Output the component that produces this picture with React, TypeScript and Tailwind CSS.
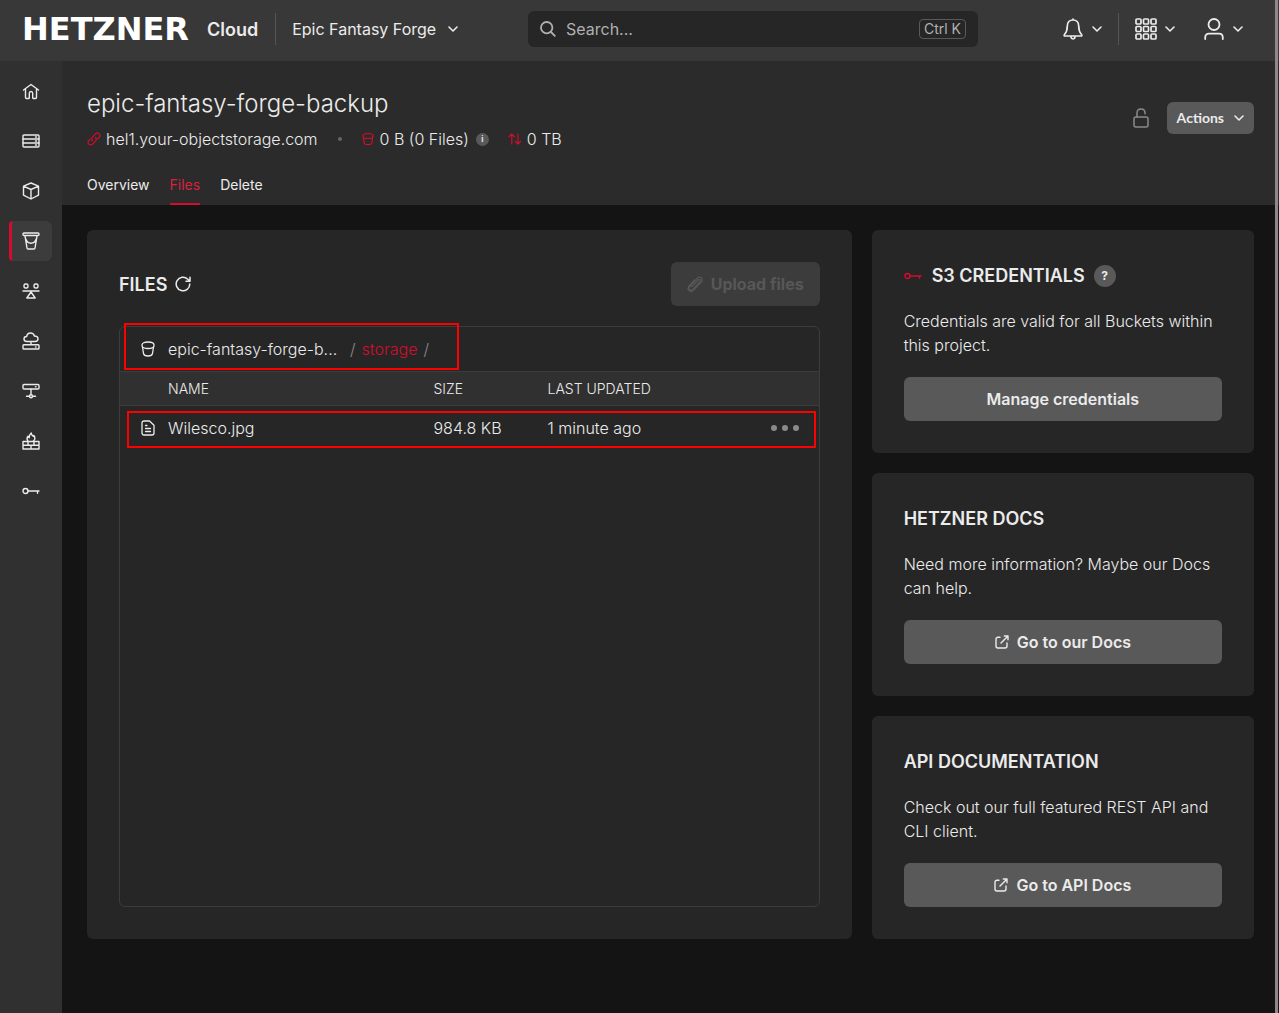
import type { ReactNode } from 'react';
import clsx from 'clsx';

interface IconProps {
    className?: string;
}

interface SvgProps extends IconProps {
    width?: number;
    height?: number;
    stroke?: number;
    children: ReactNode;
}

function Svg({ width = 18, height = 18, stroke = 1.4, className, children }: SvgProps) {
    return (
        <svg
            width={width}
            height={height}
            viewBox={`0 0 ${width} ${height}`}
            fill="none"
            stroke="currentColor"
            strokeWidth={stroke}
            strokeLinecap="round"
            strokeLinejoin="round"
            aria-hidden="true"
            className={clsx('shrink-0', className)}
        >
            {children}
        </svg>
    );
}

const ChevronIcon = ({ className }: IconProps) => (
    <Svg width={10} height={6} stroke={1.6} className={className}>
        <path d="M1 1l4 4 4-4" />
    </Svg>
);

const HomeIcon = () => (
    <Svg>
        <path d="M1.500 8L9 2.500l7.500 5.500M3.500 7v8.500c0 .7.4 1 1 1h2c.5 0 .8-.3.800-.8v-4.400c0-1 .7-1.800 1.700-1.800s1.700.8 1.700 1.800v4.400c0 .5.3.8.8.8h2c.6 0 1-.3 1-1V7" />
    </Svg>
);

const ServerIcon = () => (
    <Svg>
        <rect x="1" y="3" width="16" height="12" rx="1" />
        <path d="M1 7h16M1 11h16M13.500 5h1M13.500 9h1M13.500 13h1" />
    </Svg>
);

const VolumeIcon = () => (
    <Svg>
        <path d="M9 1l7.500 3.200v9L9 17l-7.500-3.800v-9zM1.500 4.200L9 7.500l7.500-3.300M9 7.500V17" />
    </Svg>
);

const BucketIcon = () => (
    <Svg>
        <rect x="1" y="1" width="16" height="2.500" rx="1" />
        <path d="M3 3.800l2 12.200c.1.600.5 1 1 1h6c.5 0 .9-.4 1-1l2-12.200M3.500 6.500c1 3 3 4.700 5.500 4.700s4.500-1.700 5.500-4.700" />
    </Svg>
);

const BalancerIcon = () => (
    <Svg>
        <rect x="2" y="2" width="4" height="4" rx="1.500" />
        <rect x="12" y="2" width="4" height="4" rx="1.500" />
        <path d="M1 9h16M9 10l4.200 6H4.800z" />
    </Svg>
);

const FloatingIpIcon = () => (
    <Svg>
        <path d="M5 9.500C3 9.500 2 8.500 2 7s1-2.500 2.600-2.500C5 2.300 6.500 1 8.500 1s3.500 1.300 3.900 3c2.200 0 3.600 1.100 3.600 2.800S14.800 9.500 13 9.500zM9 9.500v3" />
        <rect x="1" y="12.700" width="16" height="4.300" rx=".8" />
        <path d="M13.500 15h.5" />
    </Svg>
);

const NetworkIcon = () => (
    <Svg>
        <rect x="1" y="2.500" width="16" height="4.500" rx="1" />
        <path d="M13.500 4.800h.5M9 7v5.500M4.500 14.300h3M10.500 14.300h3" />
        <circle cx="9" cy="14.300" r="1.500" />
    </Svg>
);

const FirewallIcon = () => (
    <Svg>
        <path d="M5.800 8.800C4.500 7 5 5.500 6 4.300c.2.800.6 1.200 1.200 1.400C7.200 3.800 8 2 9.200 1c0 1.700 1 2.500 2 3.300l.7-.8c1.300 2 1.200 4-.3 5.300" />
        <path d="M1 9.500h16V17H1zM1 13.200h16M6 9.500v3.700M12 9.500v3.700M9 13.200V17" />
    </Svg>
);

const KeyIcon = ({ className }: IconProps) => (
    <Svg className={className}>
        <circle cx="3.500" cy="9" r="2.500" />
        <path d="M6 9h11M15.500 9v2.300" />
    </Svg>
);

const PailIcon = ({ className }: IconProps) => (
    <Svg width={14} height={16} stroke={1.3} className={className}>
        <path d="M1 4C1 2 3.500 1 7 1s6 1 6 3v.8c0 1.500-2.700 2.700-6 2.700S1 6.300 1 4.800z" />
        <path d="M1.500 6l1 6.500C2.800 14 4.500 15 7 15s4.200-1 4.500-2.500l1-6.500" />
    </Svg>
);

const SmallPailIcon = ({ className }: IconProps) => (
    <Svg width={12} height={14} stroke={1.2} className={className}>
        <path d="M1 3.600C1 2 3.200 1.500 6 1.500s5 .5 5 2.100v1C11 6 8.800 6.500 6 6.500S1 6 1 4.600z" />
        <path d="M1.500 6l.5 4.500C2.200 12 4 12.700 6 12.700s3.800-.7 4-2.200l.5-4.500" />
    </Svg>
);

const LinkIcon = ({ className }: IconProps) => (
    <Svg width={14} height={14} stroke={1.2} className={className}>
        <path d="M5.500 8.500c-1-1.200-.9-2.600.1-3.700l2.800-2.900c1.100-1.100 2.700-1.100 3.700-.1s1 2.600 0 3.700l-1.400 1.400" />
        <path d="M8.500 5.500c1 1.200.9 2.600-.1 3.700l-2.800 2.900c-1.100 1.100-2.700 1.100-3.700.1s-1-2.600 0-3.700l1.400-1.400" />
    </Svg>
);

const TrafficIcon = ({ className }: IconProps) => (
    <Svg width={14} height={12} stroke={1.2} className={className}>
        <path d="M3.800 11V1M1 3.800L3.800 1l2.800 2.800M10 1v10M7.200 8.200L10 11l2.800-2.800" />
    </Svg>
);

const RefreshIcon = () => (
    <Svg width={16} height={16} stroke={1.5}>
        <path d="M14.800 8A6.800 6.800 0 1 1 12.800 3.200L15 5.300M15 1.300v4h-4" />
    </Svg>
);

const DocumentIcon = () => (
    <Svg width={14} height={16} stroke={1.3}>
        <path d="M3 1h5.500L13 5.300V13c0 1.200-.8 2-2 2H3c-1.200 0-2-.8-2-2V3c0-1.200.8-2 2-2z" />
        <path d="M4.500 5.500h1.500M4.500 8.500h5M4.500 11.500h5" />
    </Svg>
);

const PaperclipIcon = () => (
    <Svg width={16} height={18} stroke={1.2}>
        <path d="M5 11.500l6-6.500c1.400-1.500 3.200.2 1.900 1.700l-7.100 7.700c-2.300 2.300-5.200-.4-3.100-2.800L10 3.300c2.900-3 6.900.5 4.200 3.700l-7.500 8.200c-3.200 3.200-7.500-.7-4.700-4.200l5.500-6" />
    </Svg>
);

const ExternalIcon = () => (
    <Svg width={14} height={14} stroke={1.4}>
        <path d="M5 2.200H3c-1.200 0-2 .8-2 2V11c0 1.200.8 2 2 2h7c1.200 0 2-.8 2-2V8M6 8l6.800-6.800M9.300 1H13v3.700" />
    </Svg>
);

const SearchIcon = ({ className }: IconProps) => (
    <Svg width={16} height={16} stroke={1.8} className={className}>
        <circle cx="6.700" cy="6.700" r="5.700" />
        <path d="M11 11l3.800 3.800" />
    </Svg>
);

const BellIcon = () => (
    <Svg width={20} height={22} stroke={1.7}>
        <path d="M10 1v1M10 2C6.500 2 4.300 4.500 4.300 8c0 5-1 6.500-2.800 8.500-.7.900-.3 1.500.5 1.500h16c.8 0 1.200-.6.500-1.500-1.800-2-2.800-3.500-2.800-8.500 0-3.500-2.200-6-5.700-6zM8 19c.2 1.300.9 2 2 2s1.800-.7 2-2" />
    </Svg>
);

const AppsIcon = () => (
    <Svg width={22} height={22} stroke={1.700}>
        {[1, 8.5, 16].map((y) =>
            [1, 8.5, 16].map((x) => <rect key={`${x}-${y}`} x={x} y={y} width="5" height="5" rx="1" />),
        )}
    </Svg>
);

const UserIcon = () => (
    <Svg width={20} height={22} stroke={1.8}>
        <circle cx="10" cy="6.500" r="5.500" />
        <path d="M1.200 21v-1.500c0-2.300 1.500-3.800 3.800-3.800h10c2.300 0 3.800 1.500 3.800 3.800V21" />
    </Svg>
);

const UnlockIcon = () => (
    <Svg width={16} height={20} stroke={1.5}>
        <rect x="1" y="9" width="14" height="10" rx="2" />
        <path d="M4 9V5c0-2.400 1.600-4 4-4s4 1.600 4 4v.8" />
    </Svg>
);

const NAV_ITEMS = [
    { label: 'Dashboard', Icon: HomeIcon },
    { label: 'Servers', Icon: ServerIcon },
    { label: 'Volumes', Icon: VolumeIcon },
    { label: 'Object Storage', Icon: BucketIcon, active: true },
    { label: 'Load Balancers', Icon: BalancerIcon },
    { label: 'Floating IPs', Icon: FloatingIpIcon },
    { label: 'Networks', Icon: NetworkIcon },
    { label: 'Firewalls', Icon: FirewallIcon },
    { label: 'Security', Icon: KeyIcon },
];

const TABS = [
    { label: 'Overview' },
    { label: 'Files', active: true },
    { label: 'Delete' },
];

const FILES = [{ name: 'Wilesco.jpg', size: '984.8 KB', updated: '1 minute ago' }];

function TopBar() {
    return (
        <header className="flex h-[61px] shrink-0 items-center bg-[#383838] pr-9 pb-[3px] pl-[22px] shadow-sm">
            <div className="flex w-[506px] shrink-0 items-center">
                <a href="#" className="flex items-center gap-[15px]">
                    <span className="w-[170px] font-['DejaVu_Sans'] text-[32px] leading-8 font-bold text-white">
                        HETZNER
                    </span>
                    <span className="text-[18px] font-semibold">Cloud</span>
                </a>
                <div className="ml-[17px] h-8 w-px bg-[#555]" />
                <button type="button" className="ml-4 flex items-center gap-3">
                    Epic Fantasy Forge
                    <ChevronIcon />
                </button>
            </div>
            <label className="flex h-9 w-[450px] items-center rounded-md bg-[#262626] px-3 text-[#b0b0b0]">
                <SearchIcon />
                <input
                    type="search"
                    aria-label="Search"
                    placeholder="Search..."
                    className="ml-[10px] min-w-0 flex-1 bg-transparent outline-none placeholder:text-[#b0b0b0]"
                />
                <kbd className="flex h-5 items-center rounded-sm border border-[#5a5a5a] px-1 font-['Inter'] text-sm">
                    Ctrl K
                </kbd>
            </label>
            <div className="ml-auto flex items-center">
                <button type="button" aria-label="Notifications" className="flex items-center gap-[9px]">
                    <BellIcon />
                    <ChevronIcon />
                </button>
                <div className="mx-4 h-8 w-px bg-[#555]" />
                <button type="button" aria-label="Products" className="flex items-center gap-2">
                    <AppsIcon />
                    <ChevronIcon />
                </button>
                <button type="button" aria-label="Account" className="ml-[29px] flex items-center gap-[9px]">
                    <UserIcon />
                    <ChevronIcon />
                </button>
            </div>
        </header>
    );
}

function SideNav() {
    return (
        <nav className="flex w-[62px] shrink-0 flex-col gap-[10px] bg-[#303030] py-[10px] pr-[10px] pl-[9px]">
            {NAV_ITEMS.map(({ label, Icon, active }) => (
                <a
                    key={label}
                    href="#"
                    aria-label={label}
                    className={clsx(
                        'flex h-10 items-center justify-center rounded-md border-l-[3px] pr-[2px]',
                        active ? 'rounded-l-sm border-[#d50c2d] bg-[#3c3c3c]' : 'border-transparent',
                    )}
                >
                    <Icon />
                </a>
            ))}
        </nav>
    );
}

function PageHeader() {
    return (
        <div className="flex h-36 items-start justify-between bg-[#2b2b2b] px-[25px]">
            <div className="flex h-full flex-col">
                <h1 className="mt-[27px] text-2xl leading-8 font-light">epic-fantasy-forge-backup</h1>
                <div className="mt-[7px] flex items-center leading-6 font-light">
                    <LinkIcon className="mr-[5px] text-[#d50c2d]" />
                    hel1.your-objectstorage.com
                    <span className="mx-5 size-1 rounded-full bg-[#666]" />
                    <SmallPailIcon className="mr-[6px] text-[#d50c2d]" />
                    0 B (0 Files)
                    <span className="mr-[19px] ml-[7px] flex size-[13px] items-center justify-center rounded-full bg-[#595959] text-[8px] leading-none font-bold">
                        i
                    </span>
                    <TrafficIcon className="mr-[5px] text-[#d50c2d]" />
                    0 TB
                </div>
                <div className="mt-auto flex gap-5">
                    {TABS.map(({ label, active }) => (
                        <a
                            key={label}
                            href="#"
                            className={clsx(
                                'border-b-2 pb-2 text-sm',
                                active ? 'border-[#d50c2d] text-[#d9213f]' : 'border-transparent',
                            )}
                        >
                            {label}
                        </a>
                    ))}
                </div>
            </div>
            <div className="mt-[41px] flex items-center gap-[18px]">
                <span className="text-[#8a8a8a]">
                    <UnlockIcon />
                </span>
                <button
                    type="button"
                    className="flex h-8 items-center gap-[10px] rounded-md bg-[#595959] px-[10px] font-['Lato'] text-sm font-bold"
                >
                    Actions
                    <ChevronIcon />
                </button>
            </div>
        </div>
    );
}

function FilesCard() {
    return (
        <section className="flex flex-col rounded-md bg-[#262626] p-8">
            <div className="flex h-11 items-center justify-between">
                <h2 className="flex items-center gap-2 text-[18px] font-semibold">
                    FILES
                    <button type="button" aria-label="Refresh">
                        <RefreshIcon />
                    </button>
                </h2>
                <button
                    type="button"
                    disabled
                    className="flex h-11 items-center gap-2 rounded-md bg-[#3c3c3c] px-4 font-bold text-[#575757]"
                >
                    <PaperclipIcon />
                    Upload files
                </button>
            </div>
            <div className="relative mt-5 flex-1 rounded-md border border-[#3c3c3c] font-light">
                <div className="flex h-11 items-center">
                    <span className="flex w-12 shrink-0 pl-[21px]">
                        <PailIcon />
                    </span>
                    <a href="#" className="w-[182px] whitespace-nowrap">
                        epic-fantasy-forge-b...
                    </a>
                    <span className="text-[#8a8a8a]">/</span>
                    <a href="#" className="mx-[6px] text-[#d50c2d]">
                        storage
                    </a>
                    <span className="text-[#8a8a8a]">/</span>
                </div>
                <table className="w-full table-fixed text-left">
                    <thead>
                        <tr className="h-[34px] border-y border-[#3c3c3c] bg-[#303030] text-sm">
                            <th className="w-12" aria-label="Type" />
                            <th className="w-[38%] font-light">NAME</th>
                            <th className="w-[114px] font-light">SIZE</th>
                            <th className="font-light">LAST UPDATED</th>
                            <th className="w-[69px]" aria-label="Options" />
                        </tr>
                    </thead>
                    <tbody>
                        {FILES.map((file) => (
                            <tr key={file.name} className="h-11">
                                <td className="pl-[21px]">
                                    <DocumentIcon />
                                </td>
                                <td>{file.name}</td>
                                <td>{file.size}</td>
                                <td>{file.updated}</td>
                                <td className="pl-[21px]">
                                    <button
                                        type="button"
                                        aria-label={`Options for ${file.name}`}
                                        className="flex gap-[5px] text-[#8a8a8a]"
                                    >
                                        <span className="size-[6px] rounded-full bg-current" />
                                        <span className="size-[6px] rounded-full bg-current" />
                                        <span className="size-[6px] rounded-full bg-current" />
                                    </button>
                                </td>
                            </tr>
                        ))}
                    </tbody>
                </table>

                {/* Highlight frames */}
                <div className="pointer-events-none absolute -top-1 left-1 h-[47px] w-[335px] border-2 border-[#f00]" />
                <div className="pointer-events-none absolute top-[84px] right-[3px] left-[7px] h-[37px] border-2 border-[#f00]" />
            </div>
        </section>
    );
}

interface InfoCardProps {
    title: ReactNode;
    text: string;
    action: ReactNode;
}

function InfoCard({ title, text, action }: InfoCardProps) {
    return (
        <section className="flex flex-col gap-5 rounded-md bg-[#262626] p-8">
            <h2 className="flex h-[27px] items-center text-[18px] font-semibold">{title}</h2>
            <p className="leading-6 font-light">{text}</p>
            {action}
        </section>
    );
}

const cardButton = 'flex h-11 items-center justify-center gap-2 rounded-md bg-[#595959] font-semibold';

export default function App() {
    return (
        <div className="relative flex min-h-screen flex-col bg-[#141414] font-['Inter',sans-serif] text-base text-[#ebebeb]">
            <TopBar />
            <div className="flex flex-1">
                <SideNav />
                <main className="min-w-0 flex-1">
                    <PageHeader />
                    <div className="grid grid-cols-[2fr_1fr] gap-5 p-[25px]">
                        <FilesCard />
                        <div className="flex flex-col gap-5">
                            <InfoCard
                                title={
                                    <>
                                        <KeyIcon className="mr-[10px] text-[#d50c2d]" />
                                        S3 CREDENTIALS
                                        <span className="ml-[9px] flex size-[22px] items-center justify-center rounded-full bg-[#595959] text-xs font-bold">
                                            ?
                                        </span>
                                    </>
                                }
                                text="Credentials are valid for all Buckets within this project."
                                action={
                                    <button type="button" className={cardButton}>
                                        Manage credentials
                                    </button>
                                }
                            />
                            <InfoCard
                                title="HETZNER DOCS"
                                text="Need more information? Maybe our Docs can help."
                                action={
                                    <a href="#" className={cardButton}>
                                        <ExternalIcon />
                                        Go to our Docs
                                    </a>
                                }
                            />
                            <InfoCard
                                title="API DOCUMENTATION"
                                text="Check out our full featured REST API and CLI client."
                                action={
                                    <a href="#" className={cardButton}>
                                        <ExternalIcon />
                                        Go to API Docs
                                    </a>
                                }
                            />
                        </div>
                    </div>
                </main>
            </div>

            {/* Scroll thumb */}
            <div className="absolute inset-y-0 right-px w-[3px] bg-[#8a8a8a]" />
        </div>
    );
}
